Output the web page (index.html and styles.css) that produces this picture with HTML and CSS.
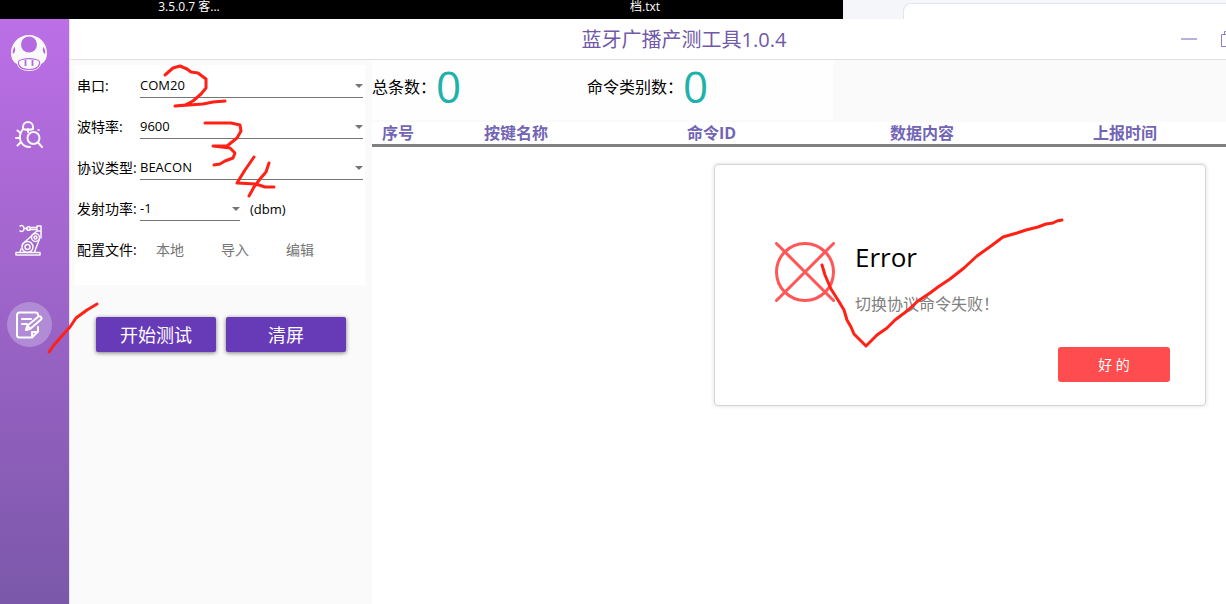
FILE: index.html
```html
<!DOCTYPE html>
<html lang="zh-CN">
<head>
<meta charset="utf-8">
<title>蓝牙广播产测工具1.0.4</title>
<link rel="stylesheet" href="styles.css">
</head>
<body>
<div class="desktop">
  <div class="wallpaper">
    <span class="file-name">3.5.0.7 客...</span>
    <span class="file-name">档.txt</span>
  </div>
  <div class="back-window"><div class="back-tab"></div></div>
</div>
<div class="app">
  <nav class="sidebar">
    <a href="#home" class="nav-item" aria-label="主页">
      <svg width="36" height="36" viewBox="0 0 36 36" fill="none">
        <path d="M18 0C8 0 0 8 0 18c0 5 2 9 6 11 1 4 5 7 12 7s11-3 12-7c4-2 6-6 6-11C36 8 28 0 18 0z" fill="#fafafa"/>
        <circle cx="18" cy="9.500" r="8" fill="#b56be0"/>
        <path d="M3.500 12c-2 3-2 5-1.500 7 2-1 3-5 1.500-7zM32.500 12c2 3 2 5 1.500 7-2-1-3-5-1.500-7z" fill="#b56be0"/>
        <path d="M11 24.500c4-1 10-1 14 0 3 .5 4 2 3.500 4.500-1 3.500-4.500 5.500-10.500 5.500S8.500 32.500 7.500 29C7 26.500 8 25 11 24.500z" stroke="#b56be0" stroke-width="1.200"/>
        <path d="M14.500 25v6M21.500 25v6" stroke="#b56be0" stroke-width="1.800"/>
      </svg>
    </a>
    <a href="#debug" class="nav-item" aria-label="调试">
      <svg width="28" height="28" viewBox="0 0 28 28" fill="none" stroke="#fafafa" stroke-width="2" stroke-linecap="round">
        <path d="M8 8V6a5 5 0 0 1 10 0v2c-3 1-7 1-10 0zM13 8v3"/>
        <path d="M8 8c-3 4-4 9-2 13 2 3.500 5 5 9 5"/>
        <circle cx="18.500" cy="17" r="6"/>
        <path d="M23 21.500l4 4.500M2.500 9.500L5.500 12M1 17h4M2.500 24.500l3-3"/>
        <path d="M23.500 9h.1"/>
      </svg>
    </a>
    <a href="#robot" class="nav-item" aria-label="自动测试">
      <svg width="28" height="32" viewBox="0 0 28 32" fill="none" stroke="#fafafa" stroke-width="1.500" stroke-linecap="round" stroke-linejoin="round">
        <path d="M5 2c2-1 4 0 4 2.500S7 8 5 7M9 4.500h3M15 3.500h7M15 5.500h7M22 2h4v5h-4zM26 7v7M22 7l-5 4"/>
        <circle cx="13.500" cy="4.500" r="1.800"/>
        <circle cx="20.500" cy="13.500" r="4"/>
        <circle cx="20.500" cy="13.500" r="1.500"/>
        <circle cx="12.500" cy="23" r="5.500"/>
        <circle cx="12.500" cy="23" r="2.500"/>
        <path d="M16.500 12l-9 8M24.500 15l-5 13M6 25l-1 3M1 28.500h24v2.500H1z"/>
      </svg>
    </a>
    <a href="#edit" class="nav-item nav-current" aria-label="测试记录">
      <svg width="28" height="28" viewBox="0 0 28 28" fill="none" stroke="#fff" stroke-width="2" stroke-linecap="round" stroke-linejoin="round">
        <path d="M23 4V3.500A2.500 2.500 0 0 0 20.500 1.500h-16A2.500 2.500 0 0 0 2 4v20a2.500 2.500 0 0 0 2.500 2.500H17l6-6V16"/>
        <path d="M17 26v-5h5.500M7 8h9M7 13h5"/>
        <path d="M11 19l1-4L23.500 5.500c1.500-1 4 1 2.500 3L15 18zM13 15l2 3"/>
      </svg>
    </a>
  </nav>
  <main class="main">
    <header class="title-bar">
      <h1 class="title">蓝牙广播产测工具1.0.4</h1>
      <div class="window-buttons">
        <button class="window-button" aria-label="最小化"><svg width="16" height="16" viewBox="0 0 16 16"><path d="M0 8h16" stroke="#b9b1dc" stroke-width="2"/></svg></button>
        <button class="window-button" aria-label="还原"><svg width="16" height="16" viewBox="0 0 16 16" fill="none" stroke="#8b80c4"><path d="M.5 3.500h12v12H.5zM3.500 3V.5h12v12H13"/></svg></button>
      </div>
    </header>
    <div class="content">
      <section class="settings">
        <form class="form-card">
          <div class="field">
            <label class="label" for="port">串口:</label>
            <div class="picker"><select id="port"><option>COM20</option></select></div>
          </div>
          <div class="field">
            <label class="label" for="baud">波特率:</label>
            <div class="picker"><select id="baud"><option>9600</option></select></div>
          </div>
          <div class="field">
            <label class="label" for="protocol">协议类型:</label>
            <div class="picker"><select id="protocol"><option>BEACON</option></select></div>
          </div>
          <div class="field">
            <label class="label" for="power">发射功率:</label>
            <div class="picker picker-short"><select id="power"><option>-1</option></select></div>
            <span class="unit">(dbm)</span>
          </div>
          <div class="field">
            <span class="label">配置文件:</span>
            <div class="file-actions">
              <button type="button" class="flat-button">本地</button>
              <button type="button" class="flat-button">导入</button>
              <button type="button" class="flat-button">编辑</button>
            </div>
          </div>
        </form>
        <div class="actions">
          <button class="raised-button">开始测试</button>
          <button class="raised-button">清屏</button>
        </div>
      </section>
      <section class="results">
        <div class="stats-bar">
          <div class="stats">
            <div class="stat">总条数：<output class="count">0</output></div>
            <div class="stat">命令类别数：<output class="count">0</output></div>
          </div>
        </div>
        <table class="records">
          <thead>
            <tr><th class="col-index">序号</th><th class="col">按键名称</th><th class="col">命令ID</th><th class="col">数据内容</th><th>上报时间</th></tr>
          </thead>
        </table>
        <div class="dialog" role="alertdialog" aria-labelledby="dialog-title">
          <div class="dialog-body">
            <svg width="60" height="60" viewBox="0 0 60 60" fill="none" stroke="#ff5757" stroke-width="3" stroke-linecap="round">
              <circle cx="30" cy="30" r="28.500"/>
              <path d="M1.500 1.500l57 57M58.500 1.500l-57 57"/>
            </svg>
            <div>
              <h2 class="dialog-title" id="dialog-title">Error</h2>
              <p class="dialog-text">切换协议命令失败！</p>
            </div>
          </div>
          <button class="dialog-button">好 的</button>
        </div>
      </section>
    </div>
  </main>
</div>
<svg class="ink" width="1226" height="604" viewBox="0 0 1226 604" fill="none" stroke="#ff2115" stroke-width="3" stroke-linecap="round" stroke-linejoin="round" aria-hidden="true">
  <path d="M165 75L173 68L180 66L187 69L191 72L198 73L206 79V88L201 94L193 101L185 105L175 106L203 104L213 102L225 101"/>
  <path d="M205 123L231 123L240 125L241 131L237 138L227 146L213 146L230 148L235 153L233 158L225 161L220 164L214 165"/>
  <path d="M254 157L245 170L237 183L256 184L265 187L274 187M269 163L266 172L260 179L254 187L249 196"/>
  <path d="M49 352L54 345L60 338L70 327L76 318L87 310L97 304"/>
  <path d="M822 265L825 275L831 289L838 300L844 310L847 320L851 327L854 334L861 341L866 346L877 335L887 328L895 320L907 311L918 301L930 293L938 287L950 279L964 268L977 256L991 246L1003 237L1017 233L1026 230L1038 227L1046 224L1053 223L1057 221L1062 220"/>
</svg>
</body>
</html>
```
FILE: styles.css
```css
* { box-sizing: border-box; }

body {
  margin: 0;
  min-height: 100vh;
  display: flex;
  flex-direction: column;
  overflow: hidden;
  background: #fff;
  color: #000;
  font: 14px/20px "Open Sans", "Noto Sans CJK SC", sans-serif;
}

button, select { font: inherit; color: inherit; }
button { border: 0; padding: 0; background: none; cursor: pointer; }

.desktop { display: flex; height: 19px; }
.wallpaper {
  flex: 0 0 843px;
  display: grid;
  grid-template-columns: 379px 1fr;
  background: #000;
}
.file-name {
  width: 152px;
  margin-left: 113px;
  text-align: center;
  color: #fff;
  font-size: 12px;
  line-height: 14px;
}
.wallpaper .file-name:last-child { margin-left: 190px; }
.back-window { flex: 1; padding: 3px 0 0 60px; background: #f5f6fa; }
.back-tab {
  height: 16px;
  background: #fff;
  border: 1px solid #e3e5ea;
  border-width: 1px 0 0 1px;
  border-radius: 8px 0 0 0;
}

.app { flex: 1; display: flex; }

.sidebar {
  flex: 0 0 69px;
  display: flex;
  flex-direction: column;
  align-items: center;
  padding: 11px 11px 0 0;
  background: linear-gradient(#bc6fe6, #7b58a9);
}
.nav-item {
  width: 45px;
  height: 45px;
  display: flex;
  align-items: center;
  justify-content: center;
  border-radius: 50%;
}
.nav-item + .nav-item { margin-top: 37px; }
.nav-item:nth-child(3) { margin-top: 60px; }
.nav-item.nav-current { margin-top: 40px; background: #b28bd7; }

.main {
  flex: 1;
  min-width: 0;
  display: flex;
  flex-direction: column;
  border-left: 1px solid #e8e2ee;
}
.title-bar {
  height: 41px;
  position: relative;
  display: flex;
  align-items: center;
  justify-content: center;
  padding: 2px 0 0 72px;
  border-bottom: 1px solid #dedede;
}
.title { margin: 0; font-size: 20px; line-height: 28px; font-weight: 400; color: #7059a8; }
.window-buttons {
  position: absolute;
  top: 12px;
  right: -11px;
  display: flex;
  gap: 24px;
}
.window-button { display: flex; }

.content { flex: 1; display: flex; }

.settings { flex: 0 0 302px; padding: 5px 7px 0 5px; background: #fafafa; }
.form-card { padding: 0 2px 15px; background: #fff; }
.field { height: 41px; display: flex; align-items: center; }
.label { flex: 0 0 63px; white-space: nowrap; }
.picker {
  flex: 1;
  position: relative;
  height: 25px;
  border-bottom: 1px solid #757575;
}
.picker::after {
  content: "";
  position: absolute;
  right: 0;
  top: 11px;
  border: 4px solid transparent;
  border-top-color: #757575;
  border-bottom: 0;
  pointer-events: none;
}
.picker-short { flex: 0 0 100px; }
.picker select {
  width: 100%;
  height: 24px;
  padding: 0;
  border: 0;
  appearance: none;
  background: none;
  font-size: 13px;
}
.unit { margin-left: 10px; font-size: 13px; }
.file-actions { display: flex; gap: 5px; }
.flat-button { width: 60px; color: #757575; }
.actions { display: flex; gap: 10px; padding-left: 21px; margin-top: 32px; }
.raised-button {
  width: 120px;
  height: 35px;
  border-radius: 2px;
  background: #673ab7;
  box-shadow: 0 1px 4px #777;
  color: #fff;
  font-size: 18px;
}

.results { flex: 1; min-width: 0; }
.stats-bar { height: 62px; background: #fafafa; }
.stats {
  width: 54%;
  height: 60px;
  display: grid;
  grid-template-columns: 215px 1fr;
  align-items: center;
  padding-bottom: 7px;
  background: #fefefe;
}
.stat { display: flex; align-items: center; font-size: 16px; white-space: nowrap; }
.count { font-size: 44px; line-height: 53px; color: #20b2aa; }

.records { width: 100%; table-layout: fixed; border-collapse: collapse; }
.records th {
  height: 23px;
  padding: 0 0 0 10px;
  border-bottom: 3px solid #808080;
  text-align: left;
  font-size: 16px;
  line-height: 22px;
  color: #7265b5;
}
.col-index { width: 102px; }
.col { width: 203px; }

.dialog {
  width: 492px;
  display: flex;
  flex-direction: column;
  margin: 17px 20px 0 auto;
  padding: 76px 35px 23px 60px;
  border: 1px solid #d5d5d5;
  border-radius: 4px;
  background: #fff;
  box-shadow: 0 0 4px #ddd;
}
.dialog-body { display: flex; gap: 20px; }
.dialog-body svg { margin-top: 1px; flex: none; }
.dialog-title { margin: 0; font-size: 26px; line-height: 32px; font-weight: 400; }
.dialog-text { margin: 19px 0 0; font-size: 16px; line-height: 24px; color: #808080; }
.dialog-button {
  align-self: flex-end;
  width: 112px;
  height: 35px;
  margin-top: 31px;
  border-radius: 3px;
  background: #ff4d4f;
  color: #fff;
}

.ink { position: absolute; top: 0; left: 0; pointer-events: none; }
```
